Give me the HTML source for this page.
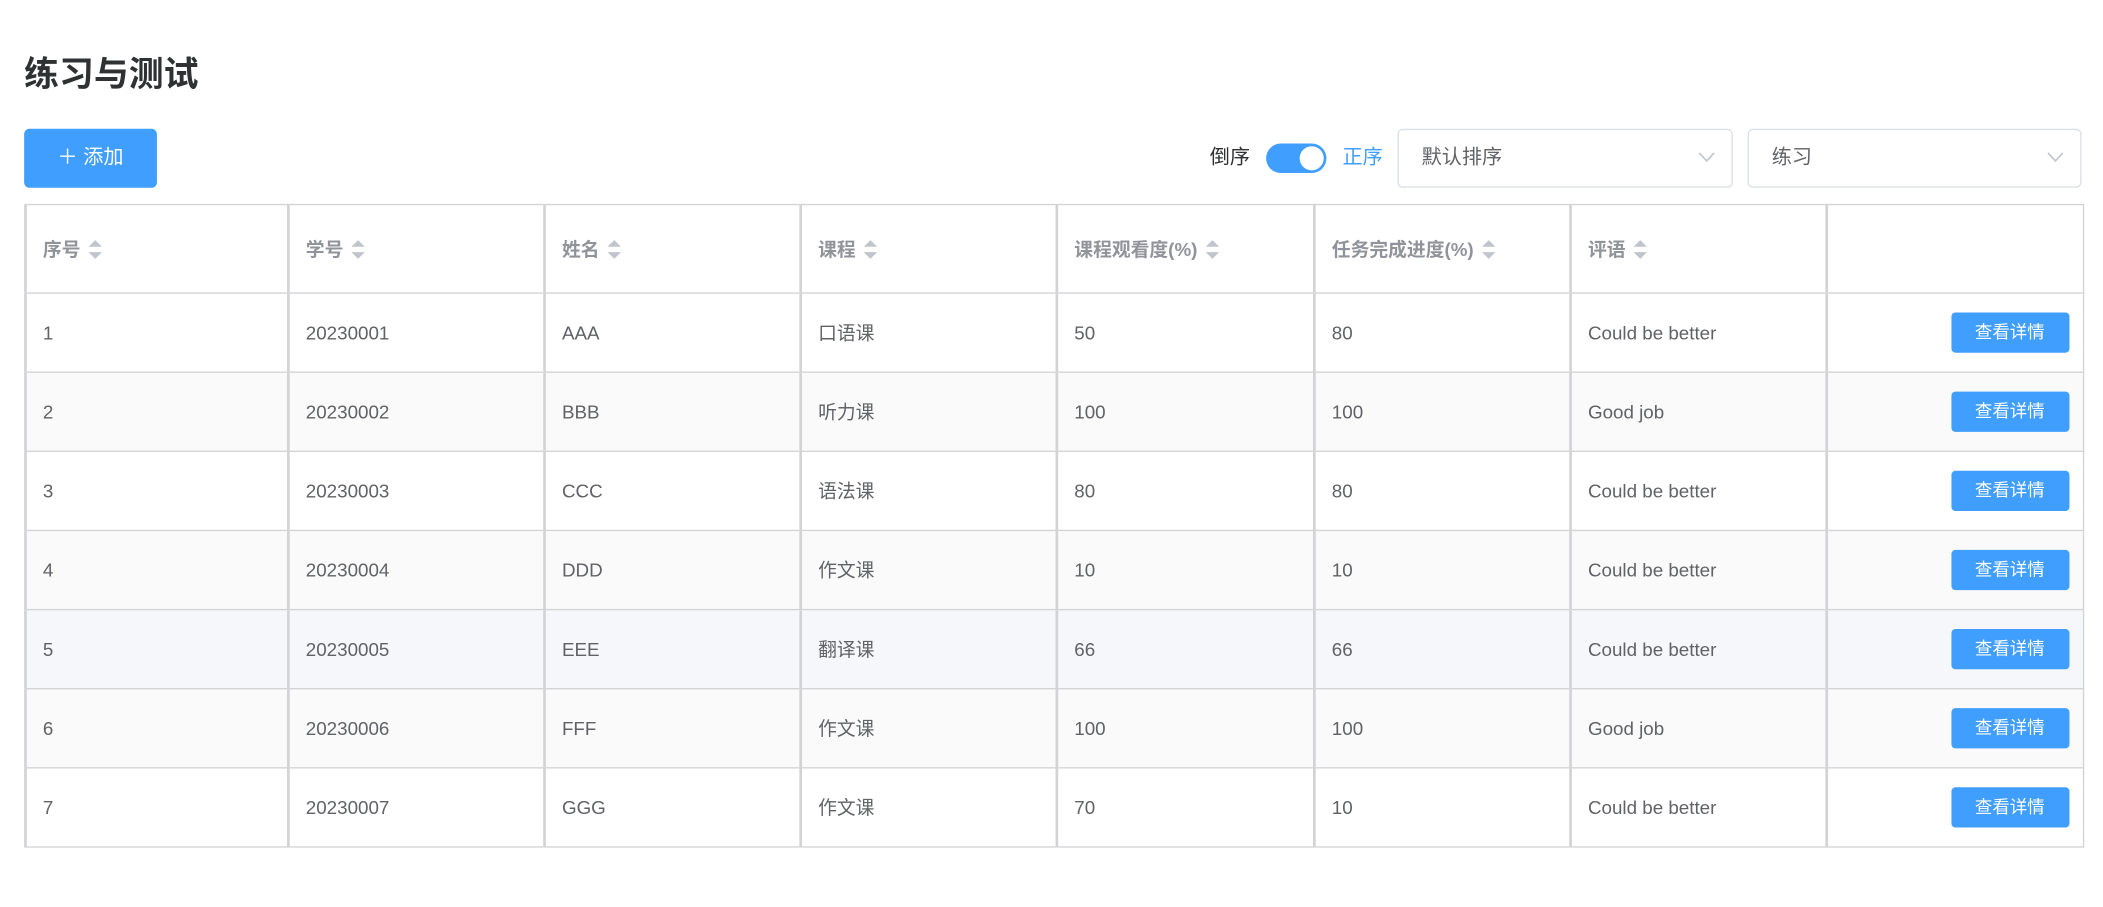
<!DOCTYPE html>
<html><head><meta charset="utf-8"><style>
html,body{margin:0;padding:0;background:#fff;width:2103px;height:906px;overflow:hidden}
#w{position:absolute;left:0;top:0;width:1568px;height:676px;transform:scale(1.3412);transform-origin:0 0;font-family:"Liberation Sans","Noto Sans CJK SC",sans-serif;color:#606266}
.a{position:absolute}
h1{position:absolute;left:18px;top:36px;margin:0;font-size:26px;font-weight:bold;color:#303133;line-height:38px}
.btn{position:absolute;left:18px;top:96px;width:99px;height:44px;background:#409eff;border-radius:4px;color:#fff;font-size:15px;line-height:44px;text-align:center}
.sel{position:absolute;top:96px;height:42px;border:1px solid #dcdfe6;border-radius:4px;font-size:15px;line-height:42px;color:#606266;box-sizing:content-box}
.sel span{position:absolute;left:17px}
.sel svg{position:absolute;right:12px;top:16px}
table{position:absolute;left:18px;top:152px;width:1534px;border-collapse:collapse;font-size:14px;table-layout:fixed}
td,th{border:1px solid #d3d3d6;padding:0 0 0 12px;text-align:left;height:58px}
th{height:65px;color:#909399;font-weight:bold;border-left:2px solid #d3d3d6}
td{border-left:2px solid #d3d3d6}
tr.s td{background:#fafafa}
tr.h td{background:#f5f7fa}
.so{display:inline-block;width:10px;height:14px;vertical-align:-2px;margin-left:6px;position:relative}
.so:before{content:"";position:absolute;left:0;top:0;border:5px solid transparent;border-bottom:5px solid #c0c4cc;border-top:0}
.so:after{content:"";position:absolute;left:0;bottom:0;border:5px solid transparent;border-top:5px solid #c0c4cc;border-bottom:0}
.vb{display:inline-block;width:88px;height:30px;background:#409eff;color:#fff;border-radius:3px;font-size:13px;line-height:30px;text-align:center;float:right;margin-right:10px}
</style></head><body><div id="w">
<h1>练习与测试</h1>
<div class="btn">＋ 添加</div>
<div class="a" style="left:902px;top:108px;font-size:15px;line-height:20px;color:#303133">倒序</div>
<div class="a" style="left:944px;top:107px;width:45px;height:22px;border-radius:11px;background:#409eff"><div class="a" style="left:25px;top:2px;width:18px;height:18px;border-radius:9px;background:#fff"></div></div>
<div class="a" style="left:1001px;top:108px;font-size:15px;line-height:20px;color:#409eff">正序</div>
<div class="sel" style="left:1042px;width:248px"><span>默认排序</span><svg width="13" height="9" viewBox="0 0 13 9"><path d="M1 1l5.5 6L12 1" fill="none" stroke="#c0c4cc" stroke-width="1.2"/></svg></div>
<div class="sel" style="left:1303px;width:247px"><span>练习</span><svg width="13" height="9" viewBox="0 0 13 9"><path d="M1 1l5.5 6L12 1" fill="none" stroke="#c0c4cc" stroke-width="1.2"/></svg></div>
<table>
<colgroup><col style="width:196px"><col style="width:191px"><col style="width:191px"><col style="width:191px"><col style="width:192px"><col style="width:191px"><col style="width:191px"><col style="width:191px"></colgroup>
<tr><th>序号<i class="so"></i></th><th>学号<i class="so"></i></th><th>姓名<i class="so"></i></th><th>课程<i class="so"></i></th><th>课程观看度(%)<i class="so"></i></th><th>任务完成进度(%)<i class="so"></i></th><th>评语<i class="so"></i></th><th></th></tr>
<tr><td>1</td><td>20230001</td><td>AAA</td><td>口语课</td><td>50</td><td>80</td><td>Could be better</td><td><span class="vb">查看详情</span></td></tr>
<tr class="s"><td>2</td><td>20230002</td><td>BBB</td><td>听力课</td><td>100</td><td>100</td><td>Good job</td><td><span class="vb">查看详情</span></td></tr>
<tr><td>3</td><td>20230003</td><td>CCC</td><td>语法课</td><td>80</td><td>80</td><td>Could be better</td><td><span class="vb">查看详情</span></td></tr>
<tr class="s"><td>4</td><td>20230004</td><td>DDD</td><td>作文课</td><td>10</td><td>10</td><td>Could be better</td><td><span class="vb">查看详情</span></td></tr>
<tr class="h"><td>5</td><td>20230005</td><td>EEE</td><td>翻译课</td><td>66</td><td>66</td><td>Could be better</td><td><span class="vb">查看详情</span></td></tr>
<tr class="s"><td>6</td><td>20230006</td><td>FFF</td><td>作文课</td><td>100</td><td>100</td><td>Good job</td><td><span class="vb">查看详情</span></td></tr>
<tr><td>7</td><td>20230007</td><td>GGG</td><td>作文课</td><td>70</td><td>10</td><td>Could be better</td><td><span class="vb">查看详情</span></td></tr>
</table>
</div></body></html>
